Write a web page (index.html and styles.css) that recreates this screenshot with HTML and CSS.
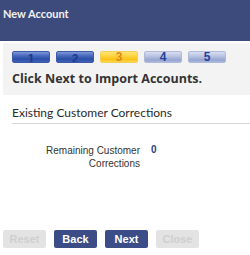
FILE: index.html
```html
<!DOCTYPE html>
<html lang="en">
<head>
    <meta charset="UTF-8">
    <title>New Account</title>
    <link rel="stylesheet" href="styles.css">
</head>
<body>
    <!-- 标题栏 -->
    <div class="titlebar">New Account</div>

    <!-- 步骤条 -->
    <div class="wizard">
        <div class="steps">
            <span class="step done">1</span>
            <span class="step done">2</span>
            <span class="step current">3</span>
            <span class="step todo">4</span>
            <span class="step todo">5</span>
        </div>
        <div class="hint">Click Next to Import Accounts.</div>
    </div>

    <div class="section">
        <div class="section-title">Existing Customer Corrections</div>
        <div class="field">
            <div class="field-label">Remaining Customer<br>Corrections</div>
            <div class="field-value">0</div>
        </div>
    </div>

    <div class="buttons">
        <button class="btn disabled">Reset</button>
        <button class="btn">Back</button>
        <button class="btn">Next</button>
        <button class="btn disabled">Close</button>
    </div>
</body>
</html>
```

FILE: styles.css
```css
* {
    margin: 0;
    padding: 0;
    box-sizing: border-box;
}

body {
    width: 250px;
    height: 255px;
    background-color: #fff;
    font-family: "Lato", "Liberation Sans", sans-serif;
    color: #333;
    display: flex;
    flex-direction: column;
}

.titlebar {
    height: 41px;
    padding: 7px 3px 0;
    background-color: #3c4b7b;
    color: #f2f2f2;
    font-weight: bold;
    font-size: 11px;
}

/* 灰色的步骤区域 */
.wizard {
    margin: 2px 0 0 3px;
    height: 52px;
    padding: 8px 0 0 9px;
    background-color: #f3f3f3;
}

.steps {
    display: flex;
    gap: 6px;
}

.step {
    width: 38px;
    height: 12px;
    border-radius: 2px;
    font-family: "Liberation Sans", sans-serif;
    font-weight: bold;
    font-size: 12px;
    line-height: 11px;
    text-align: center;
    overflow: hidden;
}

.step.done {
    background: linear-gradient(#7f98d8 0%, #4c6cc0 35%, #2b4fa6 70%, #3f62b8 100%);
    border: 1px solid #3c5aa8;
    color: #1d3a8a;
    line-height: 15px;
}

.step.current {
    background: linear-gradient(#ffe67a 0%, #ffd23c 40%, #fbc21c 75%, #ffd84a 100%);
    border: 1px solid #f5cf55;
    color: #e0891a;
}

.step.todo {
    background: linear-gradient(#d9def0 0%, #b6c0e0 45%, #95a4d0 80%, #aab6dc 100%);
    border: 1px solid #b0bad8;
    color: #25409a;
}

.hint {
    margin-top: 9px;
    font-family: "Open Sans", sans-serif;
    font-weight: bold;
    font-size: 12.5px;
    line-height: 14px;
    color: #333;
}

.section {
    padding: 10px 0 0 12px;
}

.section-title {
    font-size: 12px;
    color: #2a2a2a;
    padding-bottom: 3px;
    border-bottom: 1px solid #d6d6d6;
}

.field {
    display: flex;
    margin-top: 20px;
    gap: 11px;
}

.field-label {
    width: 128px;
    text-align: right;
    font-family: "Liberation Sans", sans-serif;
    font-size: 10px;
    line-height: 13px;
    color: #333;
}

.field-value {
    font-family: "Liberation Sans", sans-serif;
    font-size: 10px;
    font-weight: bold;
    color: #2a3f86;
}

.buttons {
    margin-top: auto;
    margin-bottom: 7px;
    padding-left: 3px;
    display: flex;
    gap: 8px;
}

.btn {
    width: 43px;
    height: 18px;
    border: none;
    border-radius: 2px;
    background-color: #3b4c86;
    color: #fff;
    font-family: "Liberation Sans", sans-serif;
    font-weight: bold;
    font-size: 11px;
}

.btn.disabled {
    background-color: #e3e3e3;
    color: #cfcfcf;
}
```
